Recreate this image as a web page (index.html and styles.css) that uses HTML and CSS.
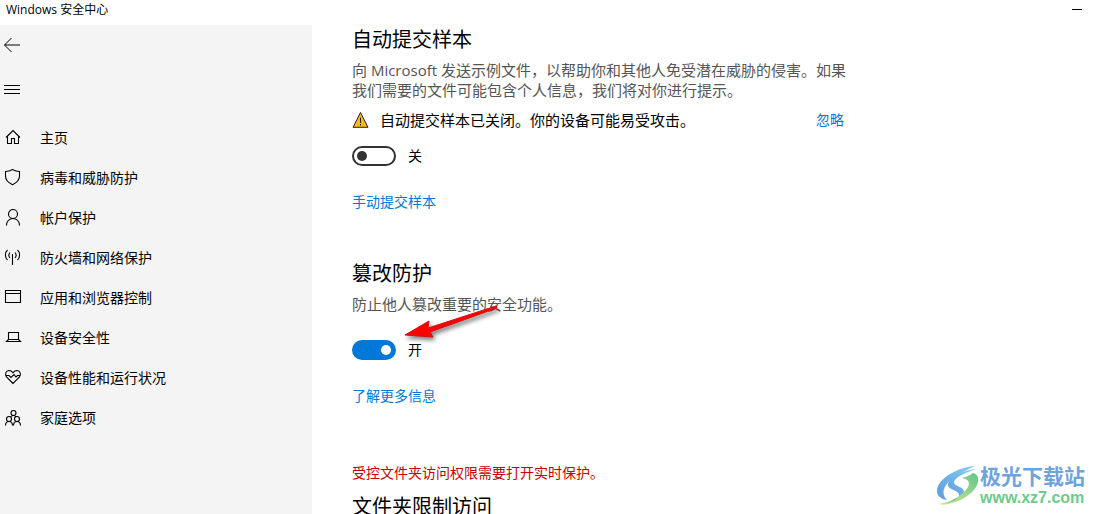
FILE: index.html
```html
<!DOCTYPE html>
<html lang="zh-CN">
<head>
    <meta charset="UTF-8">
    <meta name="viewport" content="width=device-width, initial-scale=1.0">
    <title>Windows 安全中心</title>
    <link rel="stylesheet" href="styles.css">
</head>
<body>
    <header class="titlebar">
        <span class="title">Windows 安全中心</span>
        <button class="minimize" type="button" aria-label="最小化"></button>
    </header>

    <div class="window">
        <aside class="sidebar">
            <button class="icon-btn back" type="button" aria-label="返回">
                <svg width="16" height="16" viewBox="0 0 16 16"><path d="M.5 8H16M7.5 1 .5 8l7 7"/></svg>
            </button>
            <button class="icon-btn menu" type="button" aria-label="菜单">
                <svg width="16" height="16" viewBox="0 0 16 16"><path d="M0 4.5h16M0 8.500h16M0 12.500h16"/></svg>
            </button>
            <nav class="nav">
                <a href="#">
                    <svg width="18" height="18" viewBox="0 0 18 18"><path d="M2 8.500 9 1.500l7 7M3.500 7v7.500h4v-5h3v5h4V7"/></svg>
                    主页
                </a>
                <a href="#">
                    <svg width="18" height="18" viewBox="0 0 18 18"><path d="M8.500 .5C6.500 1.700 4 2.500 1.500 2.500V7c0 4 3 6.800 7 8.700 4-1.900 7-4.700 7-8.700V2.500c-2.500 0-5-.8-7-2z"/></svg>
                    病毒和威胁防护
                </a>
                <a href="#">
                    <svg width="18" height="18" viewBox="0 0 18 18"><circle cx="9" cy="5" r="4.500"/><path d="M2.500 16.500c0-4 2.600-7 6.500-7s6.500 3 6.500 7"/></svg>
                    帐户保护
                </a>
                <a href="#">
                    <svg width="18" height="18" viewBox="0 0 18 18"><path d="M8.500 5v11M6 3.500c-1.300 1.500-1.300 4 0 5.500M11 3.500c1.300 1.500 1.300 4 0 5.500M3.500 1C.7 3.500.7 8.500 3.500 11M13.500 1c2.800 2.500 2.800 7.500 0 10"/></svg>
                    防火墙和网络保护
                </a>
                <a href="#">
                    <svg width="18" height="18" viewBox="0 0 18 18"><path d="M1.500 1.500h15v12h-15zM1.500 4.500h15"/></svg>
                    应用和浏览器控制
                </a>
                <a href="#">
                    <svg width="18" height="18" viewBox="0 0 18 18"><path d="M4.500 10.500v-7h10v7l2 2h-14zM4.500 10.500h10"/></svg>
                    设备安全性
                </a>
                <a href="#">
                    <svg width="18" height="18" viewBox="0 0 18 18"><path d="M9 14.500 2.500 8C.5 5.500 1.800 1.800 5 1.500c1.800 0 3 .8 4 2.200 1-1.400 2.200-2.200 4-2.200 3.200.3 4.500 4 2.500 6.500zM2 6.500h3l2 2 3-3 2 2.500 1.500-1.500h2.500"/></svg>
                    设备性能和运行状况
                </a>
                <a href="#">
                    <svg width="18" height="18" viewBox="0 0 18 18"><circle cx="9.500" cy="4" r="2.500"/><circle cx="5" cy="10" r="2.500"/><circle cx="13" cy="10" r="2.500"/><path d="M6.500 8c.8-1 1.500-1.500 3-1.500 1 0 1.700.5 2.500 1.500M1.500 16.500c0-2.500 1.300-4 3.500-4s3.500 1.500 3.500 4M9.500 16.500c0-2.500 1.300-4 3.500-4s3.500 1.500 3.500 4"/></svg>
                    家庭选项
                </a>
            </nav>
        </aside>

        <main class="content">
            <section class="setting">
                <h2>自动提交样本</h2>
                <p class="desc">向 Microsoft 发送示例文件，以帮助你和其他人免受潜在威胁的侵害。如果我们需要的文件可能包含个人信息，我们将对你进行提示。</p>
                <div class="warning">
                    <svg class="warning-icon" width="18" height="18" viewBox="0 0 18 18">
                        <path class="triangle" d="M8.500 1.500 16 16.300H1z"/>
                        <path class="mark" d="M8.500 6.500v5.500M8.500 13v1.500"/>
                    </svg>
                    <span>自动提交样本已关闭。你的设备可能易受攻击。</span>
                    <a class="dismiss" href="#">忽略</a>
                </div>
                <div class="toggle first">
                    <input type="checkbox" id="sample">
                    <label for="sample">关</label>
                </div>
                <a class="link" href="#">手动提交样本</a>
            </section>

            <section class="setting tamper">
                <h2>篡改防护</h2>
                <p class="desc">防止他人篡改重要的安全功能。</p>
                <div class="toggle">
                    <input type="checkbox" id="tamper" checked>
                    <label for="tamper">开</label>
                </div>
                <a class="link" href="#">了解更多信息</a>
                <svg class="arrow" width="104" height="44" viewBox="0 0 104 44">
                    <path d="M4 32 28 18l-1 7L95 3l1 2L29 29l3 5z"/>
                </svg>
            </section>

            <section class="setting folder">
                <p class="error">受控文件夹访问权限需要打开实时保护。</p>
                <h2>文件夹限制访问</h2>
            </section>
        </main>
    </div>

    <div class="watermark">
        <svg width="43" height="40" viewBox="0 0 43 40">
            <defs>
                <linearGradient id="blue" x1="0" y1="1" x2="1" y2="0">
                    <stop offset="0" stop-color="#5f9bdd"/>
                    <stop offset="1" stop-color="#86cdf0"/>
                </linearGradient>
                <linearGradient id="green" x1="0" y1="1" x2="1" y2="0">
                    <stop offset="0" stop-color="#d3e88e"/>
                    <stop offset="1" stop-color="#62c58b"/>
                </linearGradient>
            </defs>
            <path fill="url(#blue)" d="M38 0C22 1 0 12 0 25c0 5 4 8 10 9-6-6-4-14 4-20C21 8 30 4 38 0z"/>
            <path fill="url(#blue)" d="M39 3C26 4 11 12 11 19c0 5 11 5 11 10 0 2-1 4-3 5 5-1 8-4 8-8 0-6-10-5-10-10C18 11 28 7 39 3z"/>
            <path fill="url(#green)" d="M25 12c3-1 7-2 11-5 4 1 6 4 5 9-2 11-19 22-38 23 13-4 28-13 29-21 0-4-3-5-7-6z"/>
            <path fill="url(#green)" d="M17 33c-4 3-10 4-16 5 4 1 14 0 20-6z"/>
        </svg>
        <div class="watermark-text">
            <span class="site-name">极光下载站</span>
            <span class="site-url">www.xz7.com</span>
        </div>
    </div>
</body>
</html>
```
FILE: styles.css
```css
* {
    box-sizing: border-box;
}

body {
    margin: 0;
    height: 100vh;
    display: flex;
    flex-direction: column;
    overflow: hidden;
    background: #fff;
    color: #000;
    font-family: "Open Sans", "Noto Sans CJK SC", sans-serif;
    font-size: 14px;
    line-height: 20px;
}

button {
    border: none;
    background: none;
    padding: 0;
}

a {
    color: #0078d7;
    text-decoration: none;
}

.titlebar {
    display: flex;
    justify-content: space-between;
    flex: none;
    height: 25px;
    padding: 0 14px 0 6px;
    font-size: 12px;
}

.minimize {
    width: 10px;
    height: 10px;
    border-bottom: 1px solid #000;
}

.window {
    display: flex;
    flex: 1;
    min-height: 0;
}

.sidebar {
    flex: 0 0 312px;
    background: #f4f4f4;
}

.sidebar svg {
    fill: none;
    stroke: #000;
    stroke-width: 1.1;
}

.icon-btn {
    display: flex;
    align-items: center;
    width: 48px;
    padding-left: 4px;
}

.sidebar .icon-btn svg {
    stroke-width: 1;
}

.back {
    height: 40px;
}

.menu {
    height: 48px;
}

.nav {
    display: flex;
    flex-direction: column;
    margin-top: 5px;
}

.nav a {
    display: flex;
    align-items: center;
    gap: 18px;
    height: 40px;
    padding-left: 4px;
    color: #000;
}

.content {
    flex: 1;
    padding: 0 40px;
    overflow: hidden;
}

.setting {
    position: relative;
    max-width: 496px;
}

.tamper {
    margin-top: 47px;
}

.folder {
    margin-top: 57px;
}

h2 {
    margin: 0;
    font-size: 20px;
    font-weight: 400;
    line-height: 30px;
}

.desc {
    margin: 5px 0 0;
    color: #555;
    font-size: 15px;
}

.warning {
    display: flex;
    align-items: center;
    gap: 10px;
    margin-top: 10px;
    padding-right: 4px;
    font-size: 15px;
}

.warning-icon .triangle {
    fill: #fdb813;
    stroke: #222;
}

.warning-icon .mark {
    stroke: #222;
    stroke-width: 1;
}

.dismiss {
    margin-left: auto;
    font-size: 14px;
}

.toggle {
    display: flex;
    align-items: center;
    gap: 12px;
    margin-top: 26px;
}

.toggle.first {
    margin-top: 16px;
}

.toggle input {
    appearance: none;
    display: flex;
    align-items: center;
    width: 44px;
    height: 20px;
    margin: 0;
    padding: 0 3px;
    border: 2px solid #333;
    border-radius: 10px;
}

.toggle input::before {
    content: "";
    width: 10px;
    height: 10px;
    border-radius: 50%;
    background: #333;
}

.toggle input:checked {
    justify-content: flex-end;
    border-color: #0078d7;
    background: #0078d7;
}

.toggle input:checked::before {
    background: #fff;
}

.link {
    display: block;
    margin-top: 26px;
}

.arrow {
    position: absolute;
    top: 44px;
    left: 49px;
    fill: #fe0000;
    stroke: #d01010;
    stroke-width: 1;
    filter: drop-shadow(2px 3px 2px rgba(0, 0, 0, 0.5));
    pointer-events: none;
}

.error {
    margin: 0 0 9px;
    color: #c50000;
}

.watermark {
    position: absolute;
    right: 11px;
    bottom: 6px;
    display: flex;
    align-items: center;
}

.watermark-text {
    display: flex;
    flex-direction: column;
    font-weight: 700;
}

.site-name {
    color: #6fa3dc;
    font-size: 21px;
    line-height: 24px;
}

.site-url {
    color: #6ccb8c;
    font-family: "Liberation Sans", Arial, sans-serif;
    font-size: 16px;
    line-height: 20px;
}
```
